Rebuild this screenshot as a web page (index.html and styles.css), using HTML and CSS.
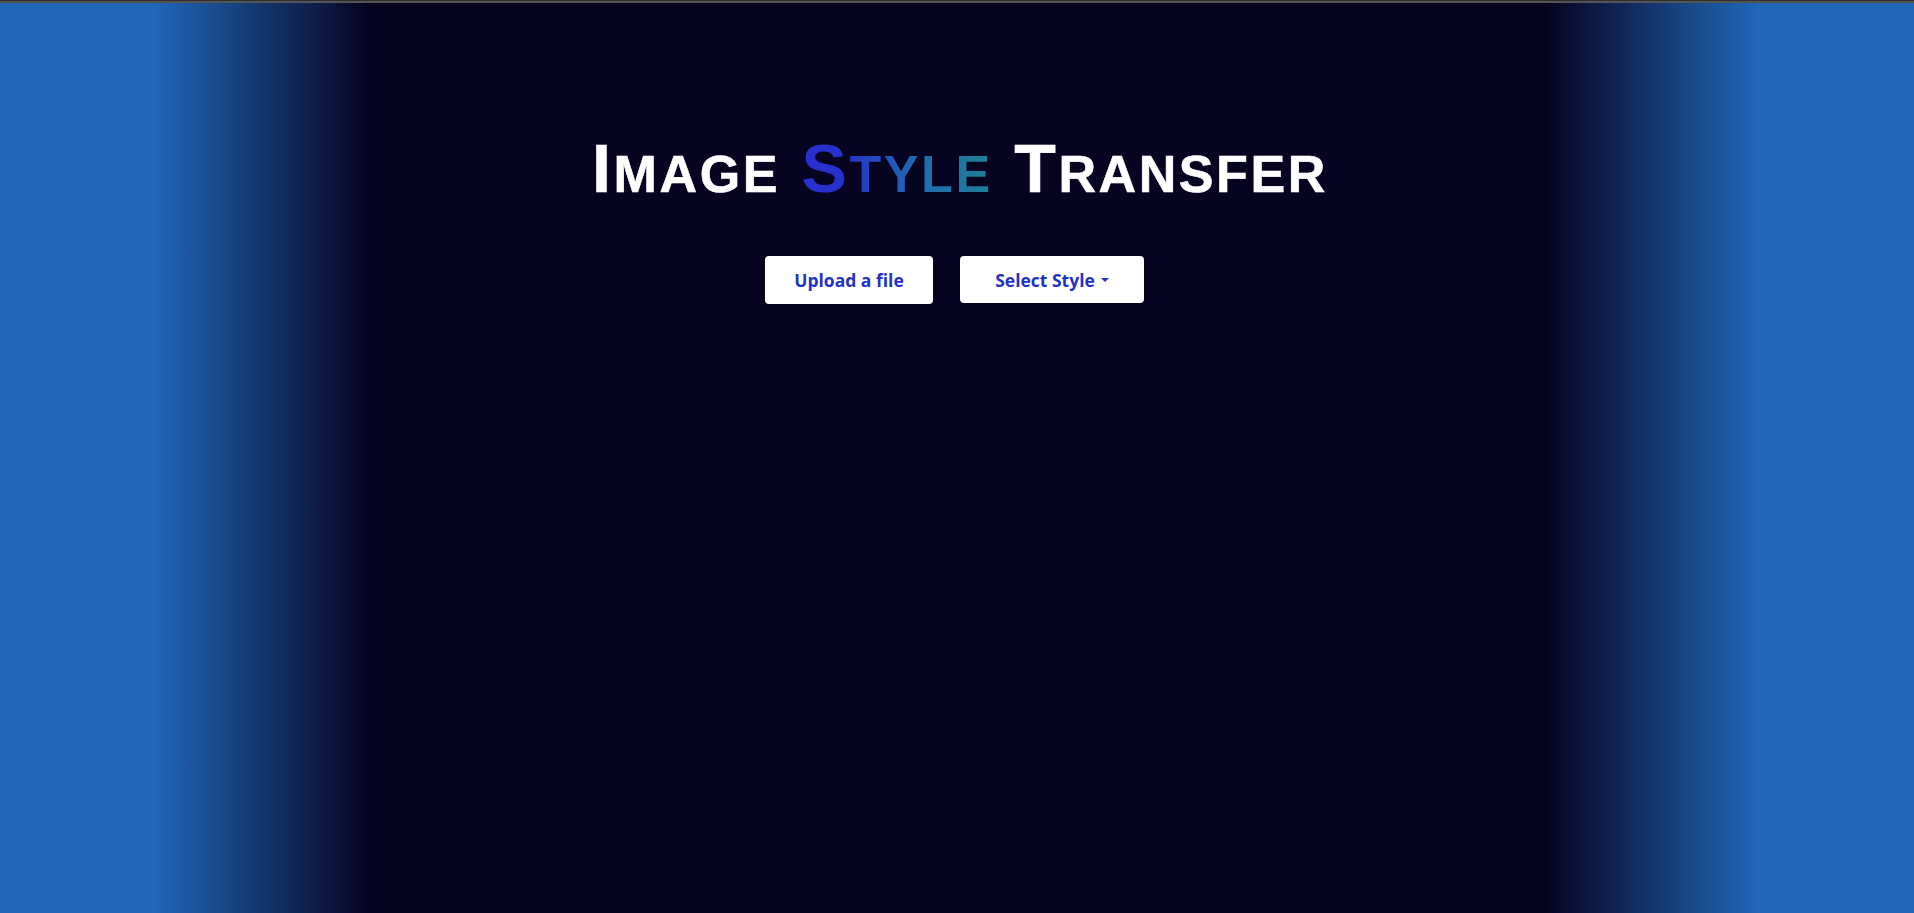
FILE: index.html
```html
<!DOCTYPE html>
<html>
<head>
<meta charset="utf-8">
<title>Image Style Transfer</title>
<link rel="stylesheet" href="styles.css">
</head>
<body>
<div class="topbar"></div>
<main class="stage">
  <h1 class="title">
    <span class="cap">I</span><span class="sc">mage</span>
    <span class="grad"><span class="cap">S</span><span class="sc">tyle</span></span>
    <span class="cap">T</span><span class="sc">ransfer</span>
  </h1>
  <div class="actions">
    <button class="btn btn-upload">Upload a file</button>
    <button class="btn btn-style">Select Style<span class="caret"></span></button>
  </div>
</main>
</body>
</html>
```
FILE: styles.css
```css
html, body {
  margin: 0;
  padding: 0;
  height: 100%;
}
body {
  background: #070422;
  display: flex;
  flex-direction: column;
  overflow: hidden;
}
.topbar {
  height: 3px;
  background: linear-gradient(to bottom, #2e2e2e 0, #2e2e2e 1px, #555 1px, #555 3px);
  flex: 0 0 auto;
}
.stage {
  flex: 1 1 auto;
  background: linear-gradient(to right,
    #2067b8 0,
    #2067b8 8.1%,
    #070422 19.2%,
    #070422 80.8%,
    #2067b8 91.9%,
    #2067b8 100%);
  display: flex;
  flex-direction: column;
  align-items: center;
}
.title {
  margin: 131px 0 0;
  padding-left: 6px;
  font-family: "Liberation Sans", Arial, sans-serif;
  font-weight: bold;
  font-size: 68px;
  line-height: 1;
  color: #ffffff;
  letter-spacing: 2.6px;
  text-align: center;
  white-space: nowrap;
  -webkit-text-stroke: 0.6px currentColor;
}
.title .sc {
  font-size: 52px;
  text-transform: uppercase;
}
.grad {
  background: linear-gradient(to right, #2a2fd4 0%, #2433c8 25%, #1f6bb0 60%, #1e7f96 100%);
  -webkit-background-clip: text;
  background-clip: text;
  color: transparent;
  -webkit-text-stroke: 0;
}
.actions {
  margin-top: 54px;
  padding-right: 5px;
  display: flex;
  gap: 27px;
  align-items: flex-start;
}
.btn {
  font-family: "Open Sans", "Noto Sans", sans-serif;
  font-weight: 700;
  font-size: 17.5px;
  color: #2432c4;
  background: #ffffff;
  border: none;
  border-radius: 4px;
  cursor: pointer;
  display: flex;
  align-items: center;
  justify-content: center;
}
.btn-upload {
  width: 168px;
  height: 48px;
}
.btn-style {
  width: 184px;
  height: 47px;
}
.caret {
  display: inline-block;
  width: 0;
  height: 0;
  margin-left: 6px;
  border-left: 4px solid transparent;
  border-right: 4px solid transparent;
  border-top: 4px solid #2432c4;
}
```
